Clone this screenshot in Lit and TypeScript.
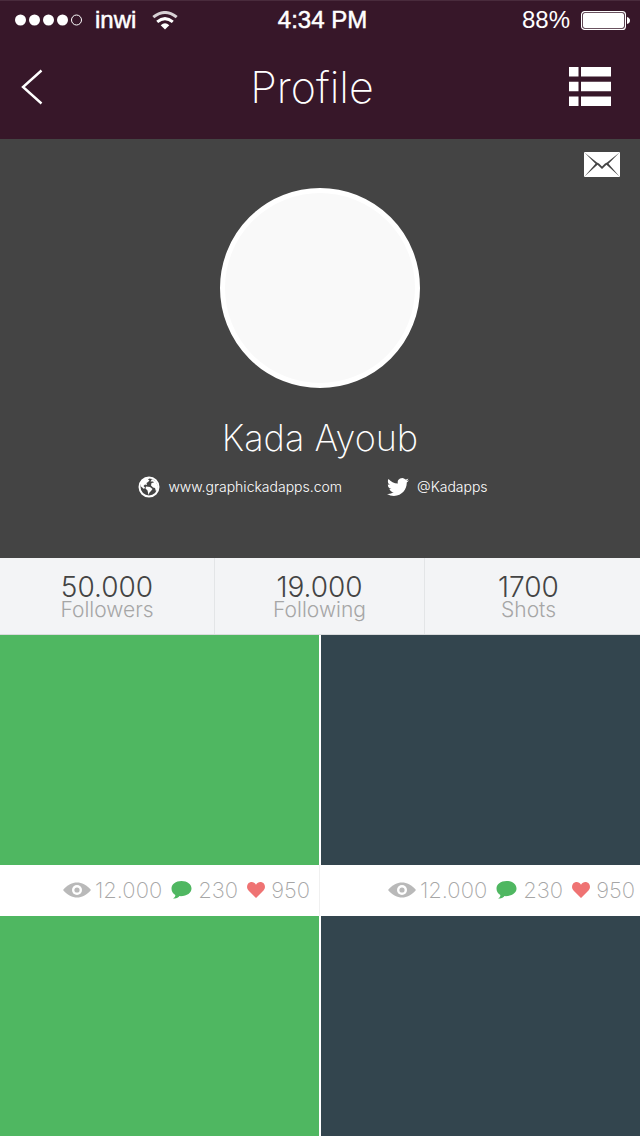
import { LitElement, html, css } from "lit";
import { customElement, property } from "lit/decorators.js";

@customElement("status-bar")
class StatusBar extends LitElement {
  static styles = css`
    :host {
      display: grid;
      grid-template-columns: 1fr auto 1fr;
      align-items: center;
      height: 40px;
      box-sizing: border-box;
      padding: 0 10px 1px 15px;
      border-top: 1px solid #492b3c;
      font: 24px/28px "Liberation Sans", Arial, sans-serif;
      color: #fff;
    }
    .side { display: flex; align-items: center; }
    .medium { -webkit-text-stroke: 0.5px #fff; }
    .dots { margin-right: 12px; }
    .wifi { margin-left: 16px; }
    .end { justify-content: flex-end; gap: 11px; }
    svg { display: block; }
  `;
  render() {
    return html`
      <div class="side">
        <svg class="dots" width="68" height="12" viewBox="0 0 68 12" fill="#fff">
          <circle cx="5.5" cy="6" r="5.5" /><circle cx="19.5" cy="6" r="5.5" />
          <circle cx="33.5" cy="6" r="5.5" /><circle cx="47.5" cy="6" r="5.5" />
          <circle cx="61.5" cy="6" r="5" fill="none" stroke="#fff" />
        </svg>
        <span class="medium">inwi</span>
        <svg class="wifi" width="26" height="19" viewBox="0 0 26 19" fill="none" stroke="#fff" stroke-width="3">
          <path d="M1.3 6.2Q13-3.2 24.7 6.2" stroke-opacity=".8" />
          <path d="M5.2 10.8Q13 4.4 20.8 10.8" />
          <path d="M8.7 14.2Q13 10.2 17.3 14.2L13 18.5Z" fill="#fff" stroke="none" />
        </svg>
      </div>
      <span class="medium">4:34 PM</span>
      <div class="side end">
        <span>88%</span>
        <svg width="49" height="19" viewBox="0 0 49 19" fill="#fff">
          <rect x=".6" y=".6" width="43.8" height="17.8" rx="3" fill="none" stroke="#fff" stroke-width="1.2" />
          <rect x="2" y="2" width="41" height="15" rx="2" />
          <path d="M46 6q3 1 3 3.500t-3 3.500z" />
        </svg>
      </div>
    `;
  }
}

@customElement("shot-card")
class ShotCard extends LitElement {
  @property() tone = "green";
  @property() views = "";
  @property() comments = "";
  @property() likes = "";
  static styles = css`
    :host { display: flex; flex-direction: column; }
    .shot { flex: 1 0 220px; }
    .green { background: #4fb761; }
    .slate { background: #33454e; }
    .counts {
      display: flex;
      align-items: center;
      justify-content: flex-end;
      height: 51px;
      box-sizing: border-box;
      padding: 0 9px 1px 0;
      font: 200 22px/28px Inter, sans-serif;
      color: #a6a6a6;
    }
    .green + .counts { box-shadow: 1px 0 #f0f0f0; }
    .slate + .counts { padding-right: 5px; }
    .count { display: flex; align-items: center; gap: 6px; }
    .count + .count { margin-left: 9px; }
    .views { gap: 4px; }
    svg { display: block; }
  `;
  render() {
    return html`
      <div class="shot ${this.tone}"></div>
      ${this.views
        ? html`<div class="counts">
            <span class="count views">
              <svg width="28" height="16" viewBox="0 0 28 16">
                <path fill="#b9b9b9" d="M0 8C5 2.500 9 .5 14 .5S23 2.500 28 8C23 13.500 19 15.500 14 15.500S5 13.500 0 8Z" />
                <circle cx="14" cy="8" r="5" fill="#fff" />
                <circle cx="14" cy="8" r="2.600" fill="#b9b9b9" />
              </svg>${this.views}</span>
            <span class="count">
              <svg width="21" height="18" viewBox="0 0 21 18" fill="#4fb761">
                <path d="M10.500 0C4.700 0 .5 3.300.5 7.600c0 2.800 1.300 5.200 3.800 6.500.2 1.500-.8 2.700-2.300 3.300 2.800.6 5.100-.3 6.500-2.300 7.100.4 12-2.900 12-7.500C20.500 3.300 16.300 0 10.500 0Z" />
              </svg>${this.comments}</span>
            <span class="count">
              <svg width="18" height="16" viewBox="0 0 18 16" fill="#ef7373">
                <path d="M9 16L1.500 8.600C-.4 6.500-.4 3.500 1.200 1.600 3.300-.6 7.200-.5 9 2.700c1.800-3.200 5.700-3.300 7.800-1.100 1.600 1.900 1.600 4.900-.3 7Z" />
              </svg>${this.likes}</span>
          </div>`
        : ""}
    `;
  }
}

@customElement("app-root")
class AppRoot extends LitElement {
  static styles = css`
    :host {
      display: flex;
      flex-direction: column;
      min-height: 100vh;
      background: #fff;
      font-family: Inter, "Open Sans", sans-serif;
      font-weight: 200;
      color: #fff;
    }
    header { background: #371729; }
    nav {
      display: grid;
      grid-template-columns: 1fr auto 1fr;
      align-items: center;
      height: 99px;
      box-sizing: border-box;
      padding: 0 29px 6px 21px;
    }
    h1, h2, dl, dt, dd { margin: 0; font-weight: inherit; }
    h1 { padding-right: 8px; font-size: 43px; line-height: 50px; }
    button { padding: 0; border: 0; background: none; color: inherit; cursor: pointer; }
    svg { display: block; }
    .menu { justify-self: end; }
    .back { justify-self: start; }
    .profile {
      display: flex;
      flex-direction: column;
      align-items: center;
      box-sizing: border-box;
      min-height: 419px;
      padding: 13px 20px 0;
      background: #444;
    }
    .mail { align-self: flex-end; }
    .avatar {
      width: 200px;
      height: 200px;
      box-sizing: border-box;
      margin-top: 11px;
      border: 5px solid #fff;
      border-radius: 50%;
      background: #f9f9f9;
    }
    h2 { margin-top: 28px; font-size: 36px; line-height: 44px; }
    .links { display: flex; gap: 45px; margin-top: 16px; padding-right: 14px; }
    .links a {
      display: flex;
      align-items: center;
      gap: 8px;
      color: #fff;
      font-size: 14px;
      font-weight: 300;
      line-height: 22px;
      text-decoration: none;
    }
    .stats {
      display: grid;
      grid-template-columns: 215fr 210fr 215fr;
      border-bottom: 1px solid #d9dbdc;
      background: #f3f4f6;
    }
    .stat {
      display: flex;
      flex-direction: column-reverse;
      justify-content: flex-end;
      align-items: center;
      height: 76px;
      box-sizing: border-box;
      padding-top: 15px;
      border-right: 1px solid #e3e5e7;
    }
    .stat:last-child { border-right: 0; padding-right: 8px; }
    dt { font-size: 21px; line-height: 18px; font-weight: 300; color: #a6a6a6; }
    dd { font-size: 28px; line-height: 28px; font-weight: 300; color: #444; }
    .shots {
      flex: 1;
      display: grid;
      grid-template-columns: 1fr 1fr;
      grid-template-rows: 281px 1fr;
      column-gap: 2px;
    }
  `;
  private stats = [
    ["Followers", "50.000"],
    ["Following", "19.000"],
    ["Shots", "1700"],
  ];
  render() {
    return html`
      <header>
        <status-bar></status-bar>
        <nav>
          <button class="back" aria-label="Back">
            <svg width="22" height="36" viewBox="0 0 22 36" fill="none" stroke="#fff" stroke-width="2.400">
              <path d="M20.500 1.500L2 18L20.500 34.500" />
            </svg>
          </button>
          <h1>Profile</h1>
          <button class="menu" aria-label="Menu">
            <svg width="42" height="39" viewBox="0 0 42 39" fill="#fff">
              <path d="M0 0h9.500v9.500H0zM12 0h30v9.500H12zM0 14.700h9.500v9.500H0zM12 14.700h30v9.500H12zM0 29.500h9.500v9.500H0zM12 29.500h30v9.500H12z" />
            </svg>
          </button>
        </nav>
      </header>
      <section class="profile">
        <button class="mail" aria-label="Message">
          <svg width="36" height="25" viewBox="0 0 36 25">
            <rect width="36" height="25" rx="1" fill="#fff" />
            <path fill="#444" d="M.5 .5L13 10.500L15 11.500L18 14.500L21 11.500L23 10.500L35.500 .5L24.500 11.800L35.500 24.500L22.500 12.800L18 17L13.500 12.800L.5 24.500L11.500 11.800Z" />
          </svg>
        </button>
        <div class="avatar"></div>
        <h2>Kada Ayoub</h2>
        <div class="links">
          <a href="#site">
            <svg width="22" height="22" viewBox="0 0 22 22">
              <circle cx="11" cy="11" r="9.500" fill="none" stroke="#fff" stroke-width="2" />
              <path fill="#fff" d="M3 7C5 3 8 1.500 11.500 2L10 3.500l1.500 1L10 6l-1.500 1 .5 2-2-.5L5.500 10l1.500 1.500L6 13 3 10.500ZM8 10.500l4 .5 2.500 2-1.500 2-1.500 1.500L10.500 19 9.500 14.500 7.500 12.500ZM12.500 5.500L14 3l4 2.500 2 5-.5 3-1.500 2-1-3.500-2-.5-2-2 .5-2.500 2.500-.5-1-1Z" />
            </svg>
            www.graphickadapps.com</a>
          <a href="#twitter">
            <svg width="22" height="22" viewBox="0 0 24 24" fill="#fff">
              <path d="M23.950 4.570a10 10 0 0 1-2.820.77 4.960 4.960 0 0 0 2.160-2.720c-.95.55-2 .95-3.130 1.180a4.920 4.920 0 0 0-8.380 4.480C7.690 8.090 4.070 6.130 1.640 3.160a4.820 4.820 0 0 0-.67 2.480c0 1.710.87 3.210 2.190 4.100a4.900 4.900 0 0 1-2.230-.62v.06a4.920 4.920 0 0 0 3.950 4.830 5 5 0 0 1-2.210.08 4.940 4.940 0 0 0 4.600 3.420A9.870 9.870 0 0 1 0 19.540a13.990 13.990 0 0 0 7.550 2.210c9.050 0 14-7.500 14-13.990 0-.21 0-.42-.02-.63a9.940 9.940 0 0 0 2.420-2.560z" />
            </svg>
            @Kadapps</a>
        </div>
      </section>
      <dl class="stats">
        ${this.stats.map(([label, value]) => html`<div class="stat"><dt>${label}</dt><dd>${value}</dd></div>`)}
      </dl>
      <main class="shots">
        <shot-card tone="green" views="12.000" comments="230" likes="950"></shot-card>
        <shot-card tone="slate" views="12.000" comments="230" likes="950"></shot-card>
        <shot-card tone="green"></shot-card>
        <shot-card tone="slate"></shot-card>
      </main>
    `;
  }
}
